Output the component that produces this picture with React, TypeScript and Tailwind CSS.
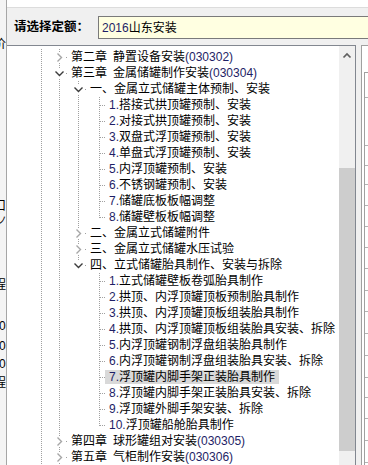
import React from "react";

type LineState = "full" | "top" | "none";
type RowDef = {
  t: string;
  lv: 1 | 2 | 3;
  ch?: "o" | "c";
  l2?: LineState;
  l3?: LineState;
  sel?: boolean;
};

const ROWS: RowDef[] = [
  { t: "第二章\u2002静置设备安装(030302)", lv: 1, ch: "c" },
  { t: "第三章\u2002金属储罐制作安装(030304)", lv: 1, ch: "o" },
  { t: "一、金属立式储罐主体预制、安装", lv: 2, ch: "o", l2: "full" },
  { t: "1.搭接式拱顶罐预制、安装", lv: 3, l2: "full", l3: "full" },
  { t: "2.对接式拱顶罐预制、安装", lv: 3, l2: "full", l3: "full" },
  { t: "3.双盘式浮顶罐预制、安装", lv: 3, l2: "full", l3: "full" },
  { t: "4.单盘式浮顶罐预制、安装", lv: 3, l2: "full", l3: "full" },
  { t: "5.内浮顶罐预制、安装", lv: 3, l2: "full", l3: "full" },
  { t: "6.不锈钢罐预制、安装", lv: 3, l2: "full", l3: "full" },
  { t: "7.储罐底板板幅调整", lv: 3, l2: "full", l3: "full" },
  { t: "8.储罐壁板板幅调整", lv: 3, l2: "full", l3: "top" },
  { t: "二、金属立式储罐附件", lv: 2, ch: "c", l2: "full" },
  { t: "三、金属立式储罐水压试验", lv: 2, ch: "c", l2: "full" },
  { t: "四、立式储罐胎具制作、安装与拆除", lv: 2, ch: "o", l2: "top" },
  { t: "1.立式储罐壁板卷弧胎具制作", lv: 3, l2: "none", l3: "full" },
  { t: "2.拱顶、内浮顶罐顶板预制胎具制作", lv: 3, l2: "none", l3: "full" },
  { t: "3.拱顶、内浮顶罐顶板组装胎具制作", lv: 3, l2: "none", l3: "full" },
  { t: "4.拱顶、内浮顶罐顶板组装胎具安装、拆除", lv: 3, l2: "none", l3: "full" },
  { t: "5.内浮顶罐钢制浮盘组装胎具制作", lv: 3, l2: "none", l3: "full" },
  { t: "6.内浮顶罐钢制浮盘组装胎具安装、拆除", lv: 3, l2: "none", l3: "full" },
  { t: "7.浮顶罐内脚手架正装胎具制作", lv: 3, l2: "none", l3: "full", sel: true },
  { t: "8.浮顶罐内脚手架正装胎具安装、拆除", lv: 3, l2: "none", l3: "full" },
  { t: "9.浮顶罐外脚手架安装、拆除", lv: 3, l2: "none", l3: "full" },
  { t: "10.浮顶罐船舱胎具制作", lv: 3, l2: "none", l3: "top" },
  { t: "第四章\u2002球形罐组对安装(030305)", lv: 1, ch: "c" },
  { t: "第五章\u2002气柜制作安装(030306)", lv: 1, ch: "c" },
];

const L0 = 34;
const L1 = 52;
const L2 = 71;
const L3 = 92;
const GUTTER = { 1: 60, 2: 79, 3: 98 } as const;
const LEVEL_X = { 1: L1, 2: L2, 3: L3 } as const;
const DOT = "#a0a0a0";

function Txt({ s }: { s: string }) {
  const parts = s.split(/([0-9().]+)/);
  return (
    <>
      {parts.map((p, i) =>
        /^[0-9().]+$/.test(p) ? (
          <span key={i} className="text-[#1e1e66]">
            {p}
          </span>
        ) : (
          <span key={i}>{p}</span>
        )
      )}
    </>
  );
}

function VLine({ x, state }: { x: number; state: LineState }) {
  if (state === "none") return null;
  return (
    <line
      x1={x + 0.5}
      x2={x + 0.5}
      y1={0}
      y2={state === "full" ? 16 : 9}
      stroke={DOT}
      strokeWidth={1}
      strokeDasharray="1 1"
      shapeRendering="crispEdges"
    />
  );
}

function Gutter({ r }: { r: RowDef }) {
  const g = GUTTER[r.lv];
  const lx = LEVEL_X[r.lv];
  return (
    <svg width={g} height={16} className="shrink-0 block">
      <VLine x={L0} state="full" />
      <VLine x={L1} state="full" />
      {r.lv >= 2 && <VLine x={L2} state={r.l2 ?? "none"} />}
      {r.lv >= 3 && <VLine x={L3} state={r.l3 ?? "none"} />}
      <line
        x1={lx + 1}
        x2={g}
        y1={8.5}
        y2={8.5}
        stroke={DOT}
        strokeWidth={1}
        strokeDasharray="1 1"
        shapeRendering="crispEdges"
      />
      {r.ch && <rect x={lx - 5} y={3} width={11} height={11} fill="#ffffff" />}
      {r.ch === "c" && (
        <polyline
          points={`${lx - 1.5},4.5 ${lx + 2.5},8.5 ${lx - 1.5},12.5`}
          fill="none"
          stroke="#a6a6a6"
          strokeWidth={1.4}
        />
      )}
      {r.ch === "o" && (
        <polyline
          points={`${lx - 3.5},6.5 ${lx + 0.5},10.5 ${lx + 4.5},6.5`}
          fill="none"
          stroke="#3c3c3c"
          strokeWidth={1.4}
        />
      )}
    </svg>
  );
}

function TreeRow({ r }: { r: RowDef }) {
  return (
    <div className="flex items-center h-[16px]">
      <Gutter r={r} />
      <span
        className={`h-[14px] leading-[14px] px-[4px] whitespace-nowrap text-[12px] text-black ${
          r.sel ? "bg-[#d9d9d9]" : ""
        }`}
      >
        <Txt s={r.t} />
      </span>
    </div>
  );
}

const GRID = [25, 48, 20, 19, 21, 21, 21, 21, 22, 21, 22, 22, 22, 20, 21, 22, 22, 22];

export default function App() {
  return (
    <div className="w-[368px] h-[465px] overflow-hidden bg-[#f0f0f0] flex font-['Liberation_Sans','Noto_Sans_CJK_SC',sans-serif]">
      {/* sliver of the window behind */}
      <div className="relative w-[7px] h-full shrink-0 overflow-hidden border-r border-[#a6a6a6] bg-[#f4f4f4] text-[12px] leading-[14px] text-black">
        <span className="absolute left-[-6px] top-[37px]">价</span>
        <span className="absolute left-[-6px] top-[199px]">口</span>
        <span className="absolute left-[-3px] top-[214px] text-[10px]">ノ</span>
        <span className="absolute left-[-6px] top-[278px]">程</span>
        <span className="absolute left-[-1px] top-[319px]">0</span>
        <span className="absolute left-[-1px] top-[339px]">0</span>
        <span className="absolute left-[-1px] top-[357px]">0</span>
        <span className="absolute left-[-6px] top-[376px]">程</span>
      </div>

      <div className="flex-1 flex flex-col min-w-0">
        <div className="h-[8px] bg-white border-b border-[#dcdcdc] shrink-0" />
        <div className="h-[37px] shrink-0 pt-[8px] pl-[7px] flex items-start">
          <div className="h-[23px] flex items-center w-[84px] shrink-0 text-[12.5px] font-bold text-black leading-none">
            请选择定额：
          </div>
          <div className="h-[23px] w-[290px] shrink-0 bg-[#ffffe1] border border-[#7a7a7a] flex items-center pl-[3px] text-[12px] text-black whitespace-nowrap">
            <Txt s="2016山东安装" />
          </div>
        </div>

        <div className="flex-1 flex min-h-0">
          {/* tree view */}
          <div className="w-[349px] shrink-0 flex border-t border-r border-[#828790] bg-white">
            <div className="w-[332px] shrink-0 overflow-hidden pt-[3px]">
              {ROWS.map((r, i) => (
                <TreeRow key={i} r={r} />
              ))}
            </div>
            <div className="w-[16px] shrink-0 bg-[#f0f0f0] flex flex-col">
              <div className="h-[17px] shrink-0 flex items-center justify-center">
                <svg width={16} height={17} className="block">
                  <polyline
                    points="4.5,11.5 8,8 11.5,11.5"
                    fill="none"
                    stroke="#606060"
                    strokeWidth={1.7}
                  />
                </svg>
              </div>
              <div className="h-[105px] shrink-0" />
              <div className="h-[283px] shrink-0 bg-[#cdcdcd]" />
            </div>
          </div>

          <div className="w-[5px] shrink-0" />

          {/* table behind on the right */}
          <div className="flex-1 bg-white border-t border-l border-[#a0a0a0] min-w-0">
            <div className="ml-[2px] mt-[26px] border-l border-t border-[#a0a0a0]">
              {GRID.map((h, i) => (
                <div key={i} style={{ height: h }} className="border-b border-[#b4b4b4] box-border" />
              ))}
            </div>
          </div>
        </div>
      </div>
    </div>
  );
}
